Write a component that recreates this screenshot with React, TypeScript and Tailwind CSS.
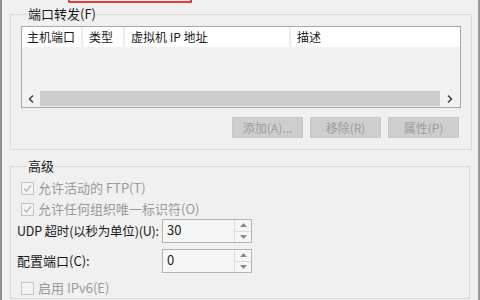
import React from 'react';

const font = { fontFamily: '"Noto Sans CJK SC", "Noto Sans", sans-serif' };

function CheckBox({ checked }: { checked?: boolean }) {
  return (
    <span className="flex h-[13px] w-[13px] items-center justify-center border border-[#c4c4c4] bg-[#f4f4f4]">
      {checked && (
        <svg width="11" height="11" viewBox="0 0 11 11">
          <polyline points="2,5.5 4.5,8 9,2.5" fill="none" stroke="#b8b8b8" strokeWidth="1.3" />
        </svg>
      )}
    </span>
  );
}

function Spin({ value }: { value: string }) {
  return (
    <div className="flex h-[24px] w-[90px] border border-[#b4b4b4] bg-[#f6f6f6]">
      <div className="flex-1 pl-[4px] pt-[1px] text-[13px] leading-[18px] text-[#1a1a1a]">{value}</div>
      <div className="flex w-[17px] flex-col border-l border-[#dcdcdc]">
        <div className="flex flex-1 items-center justify-center border-b border-[#dcdcdc]">
          <svg width="7" height="4" viewBox="0 0 7 4"><polygon points="0,4 3.5,0 7,4" fill="#8a8a8a" /></svg>
        </div>
        <div className="flex flex-1 items-center justify-center">
          <svg width="7" height="4" viewBox="0 0 7 4"><polygon points="0,0 7,0 3.5,4" fill="#8a8a8a" /></svg>
        </div>
      </div>
    </div>
  );
}

export default function App() {
  const buttons = ['添加(A)...', '移除(R)', '属性(P)'];

  return (
    <div
      className="h-[300px] w-[480px] overflow-hidden border-l-2 border-r-2 border-l-[#8e8e8e] border-r-[#9a9a9a] bg-[#f0f0f0]"
      style={font}
    >
      {/* red highlight cut off at top */}
      <div className="ml-[66px] h-[3px] w-[124px] border-x-2 border-b-2 border-[#e23b3b]" />

      {/* 端口转发 */}
      <fieldset className="ml-[8px] mt-[4px] w-[458px] border border-[#dadada] px-[10px] pb-[11px]">
        <legend className="ml-[6px] px-[1px] text-[13px] leading-[14px] text-[#1a1a1a]">端口转发(F)</legend>

        <div className="mt-[5px] flex h-[82px] w-[440px] flex-col border border-[#a8a8a8] bg-[#f2f2f2]">
          <div className="flex h-[20px] whitespace-nowrap bg-white text-[12px] leading-[20px] text-[#1a1a1a]">
            <div className="w-[61px] border-r-2 border-[#ececec] pl-[5px]">主机端口</div>
            <div className="w-[42px] border-r-2 border-[#ececec] pl-[6px]">类型</div>
            <div className="w-[166px] border-r-2 border-[#ececec] pl-[6px]">虚拟机 IP 地址</div>
            <div className="flex-1 pl-[6px]">描述</div>
          </div>
          <div className="flex-1" />
          <div className="flex h-[17px] items-center">
            <div className="flex w-[18px] items-center justify-center">
              <svg width="6" height="8" viewBox="0 0 6 8"><polyline points="5,0.5 1.5,4 5,7.5" fill="none" stroke="#404040" strokeWidth="1.5" /></svg>
            </div>
            <div className="h-[15px] flex-1 bg-[#cdcdcd]" />
            <div className="flex w-[20px] items-center justify-center">
              <svg width="6" height="8" viewBox="0 0 6 8"><polyline points="1,0.5 4.5,4 1,7.5" fill="none" stroke="#404040" strokeWidth="1.5" /></svg>
            </div>
          </div>
        </div>

        <div className="mt-[9px] flex w-[438px] justify-end gap-[7px]">
          {buttons.map((b) => (
            <div
              key={b}
              className="flex h-[21px] w-[71px] items-center justify-center border border-[#c8c8c8] bg-[#cecece] text-[12px] text-[#9c9c9c]"
            >
              {b}
            </div>
          ))}
        </div>
      </fieldset>

      {/* 高级 */}
      <fieldset className="ml-[8px] mt-[9px] h-[140px] w-[460px] border border-[#dadada] px-[10px]">
        <legend className="ml-[6px] px-[1px] text-[13px] leading-[14px] text-[#1a1a1a]">高级</legend>

        <div className="mt-[8px] flex flex-col gap-[7px] text-[13px] leading-[14px] text-[#9a9a9a]">
          <label className="flex items-center gap-[4px]">
            <CheckBox checked />
            <span>允许活动的 FTP(T)</span>
          </label>
          <label className="flex items-center gap-[4px]">
            <CheckBox checked />
            <span>允许任何组织唯一标识符(O)</span>
          </label>
        </div>

        <div className="-ml-[4px] mt-[3px] flex items-center whitespace-nowrap text-[12px] text-[#1a1a1a]">
          <span className="w-[145px] shrink-0 text-[12.5px] tracking-[-0.2px]">UDP 超时(以秒为单位)(U):</span>
          <Spin value="30" />
        </div>
        <div className="-ml-[4px] mt-[6px] flex items-center whitespace-nowrap text-[13px] text-[#1a1a1a]">
          <span className="w-[145px] shrink-0">配置端口(C):</span>
          <Spin value="0" />
        </div>

        <label className="mt-[8px] flex items-center gap-[4px] text-[13px] leading-[14px] text-[#9a9a9a]">
          <CheckBox />
          <span>启用 IPv6(E)</span>
        </label>
      </fieldset>
    </div>
  );
}
